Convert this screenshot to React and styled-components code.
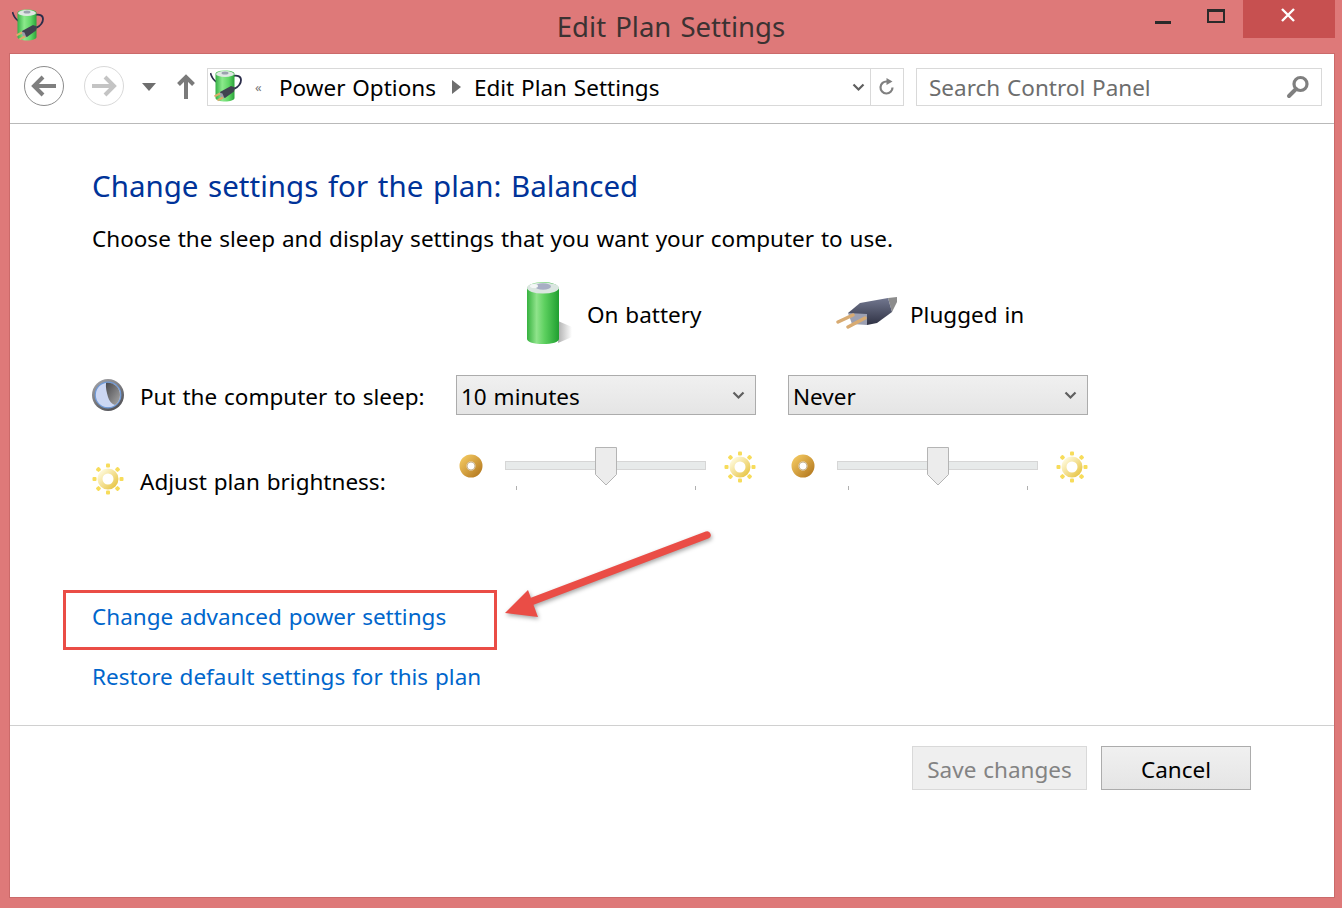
import React from "react";
import styled, { createGlobalStyle } from "styled-components";

const GlobalStyle = createGlobalStyle`
  html, body {
    margin: 0;
    padding: 0;
    background: #de7979;
  }
  * {
    box-sizing: border-box;
  }
`;

const FONT = `"Noto Sans", "Open Sans", "Liberation Sans", sans-serif`;

function PowerIcon({ id, size = 32 }) {
  return (
    <svg width={size} height={size} viewBox="0 0 32 32">
      <defs>
        <linearGradient id={`${id}-body`} x1="0" y1="0" x2="1" y2="0">
          <stop offset="0" stopColor="#35b045" />
          <stop offset="0.35" stopColor="#8ce98c" />
          <stop offset="0.7" stopColor="#5fd765" />
          <stop offset="1" stopColor="#2ba23a" />
        </linearGradient>
      </defs>
      <path d="M0.500 3c1 4 3 7 6 9" fill="none" stroke="#2b2d4a" strokeWidth="1.600" />
      <path d="M23 6c4-1 8 0 8 4 0 4-3 7-7 9" fill="none" stroke="#2b2d4a" strokeWidth="1.800" />
      <path d="M5.500 4c0-2 3.500-3.500 9.500-3.500s9.500 1.500 9.500 3.500v24c0 2-4.500 3.500-9.500 3.500S5.500 30 5.500 28z" fill={`url(#${id}-body)`} />
      <ellipse cx="15" cy="4" rx="9" ry="3" fill="#dfe7e3" />
      <ellipse cx="15" cy="3" rx="3.500" ry="1.600" fill="#9aa2ae" />
      <path d="M10 22l11-6 4 1.500-1 4-9 6.500-3-1z" fill="#40424f" />
      <path d="M9 22.500l3.500 1 2 5-3.500-1z" fill="#9a9dab" />
      <path d="M10 23.500l-5.500 2.800M13 27.500l-5.500 2.800" stroke="#dcab6a" strokeWidth="2" />
    </svg>
  );
}

function BigBattery() {
  return (
    <svg width="48" height="64" viewBox="0 0 48 64">
      <defs>
        <linearGradient id="bat-body" x1="0" y1="0" x2="1" y2="0">
          <stop offset="0" stopColor="#36b23f" />
          <stop offset="0.3" stopColor="#8fe38b" />
          <stop offset="0.55" stopColor="#5dd05f" />
          <stop offset="1" stopColor="#1f9f30" />
        </linearGradient>
        <linearGradient id="bat-shadow" x1="0" y1="0" x2="1" y2="0">
          <stop offset="0" stopColor="#b0b0b0" />
          <stop offset="1" stopColor="#ffffff" />
        </linearGradient>
      </defs>
      <path d="M32 40l14 6v10l-14 6z" fill="url(#bat-shadow)" />
      <path d="M1 8c0-4 7-7 16-7s16 3 16 7v50c0 3-7 5-16 5S1 61 1 58z" fill="url(#bat-body)" />
      <ellipse cx="17" cy="7" rx="16" ry="5.500" fill="#dbe6e1" />
      <ellipse cx="17" cy="5.500" rx="8" ry="3.200" fill="#a8aec4" />
      <ellipse cx="8" cy="5" rx="4" ry="2" fill="#f4f7f6" />
    </svg>
  );
}

function BigPlug() {
  return (
    <svg width="64" height="32" viewBox="0 0 64 32">
      <defs>
        <linearGradient id="plug-body" x1="0" y1="0" x2="0" y2="1">
          <stop offset="0" stopColor="#72778f" />
          <stop offset="1" stopColor="#2f3244" />
        </linearGradient>
      </defs>
      <path d="M53 1l9-1v5l-5 10z" fill="#8c8c8c" />
      <path d="M13 16L25 6 53 1l4 14-15 11-10 2z" fill="url(#plug-body)" />
      <path d="M13 16l19 1v11l-15-1z" fill="#9ca0b2" />
      <path d="M3 25l15-7M13 30l17-9" stroke="#d8ab72" strokeWidth="3.400" strokeLinecap="round" />
    </svg>
  );
}

function SleepIcon() {
  return (
    <svg width="32" height="32" viewBox="0 0 32 32">
      <defs>
        <linearGradient id="sleep-ring" x1="0" y1="0" x2="0.600" y2="1">
          <stop offset="0" stopColor="#a9a9ac" />
          <stop offset="1" stopColor="#55555a" />
        </linearGradient>
        <linearGradient id="sleep-moon" x1="0" y1="0" x2="1" y2="1">
          <stop offset="0" stopColor="#48484c" />
          <stop offset="1" stopColor="#a8a8a8" />
        </linearGradient>
      </defs>
      <circle cx="16" cy="16" r="16" fill="url(#sleep-ring)" />
      <circle cx="16" cy="16" r="12.800" fill="#ccd7f3" stroke="#6f9ad8" strokeWidth="1.200" />
      <path d="M14 4c7-1 14 4 14 12 0 4-2 8-5 10-3-1-6-4-7-8-1.500-5-2.500-10-2-14z" fill="url(#sleep-moon)" />
    </svg>
  );
}

function SunIcon({ id, size = 32 }) {
  const dots = [0, 45, 90, 135, 180, 225, 270, 315];
  return (
    <svg width={size} height={size} viewBox="0 0 32 32">
      <defs>
        <linearGradient id={id} x1="0" y1="0" x2="1" y2="1">
          <stop offset="0" stopColor="#fffbe0" />
          <stop offset="1" stopColor="#e8c545" />
        </linearGradient>
      </defs>
      {dots.map((d) => (
        <rect key={d} x="14" y="0.500" width="4" height="4" rx="1" fill="#f7dc5a" transform={`rotate(${d} 16 16)`} />
      ))}
      <circle cx="16" cy="16" r="8" fill="none" stroke={`url(#${id})`} strokeWidth="5" />
      <circle cx="16" cy="16" r="4" fill="#fff" />
    </svg>
  );
}

function DimIcon({ id }) {
  return (
    <svg width="24" height="24" viewBox="0 0 24 24">
      <defs>
        <linearGradient id={id} x1="0" y1="0" x2="1" y2="1">
          <stop offset="0" stopColor="#efc35c" />
          <stop offset="1" stopColor="#b97f25" />
        </linearGradient>
      </defs>
      <circle cx="12" cy="12" r="8" fill="none" stroke={`url(#${id})`} strokeWidth="7" />
      <circle cx="12" cy="12" r="4" fill="#fff" stroke="#8f6b2b" strokeWidth="0.500" />
    </svg>
  );
}

function NavArrow({ color, flip }) {
  return (
    <svg width="26" height="22" viewBox="0 0 26 22" style={flip ? { transform: "scaleX(-1)" } : undefined}>
      <path d="M12 2L3 11l9 9M3.500 11H25" fill="none" stroke={color} strokeWidth="4" />
    </svg>
  );
}

function Chevron({ color = "#5f5f5f" }) {
  return (
    <svg width="13" height="9" viewBox="0 0 13 9">
      <path d="M1.500 1.500l5 5 5-5" fill="none" stroke={color} strokeWidth="2.200" />
    </svg>
  );
}

function SliderControl({ id }) {
  return (
    <SliderRow>
      <DimSlot>
        <DimIcon id={`dim-${id}`} />
      </DimSlot>
      <Slider>
        <SliderTrack />
        <SliderThumb width="22" height="39" viewBox="0 0 22 39">
          <path d="M.5.5h21v27L11 38 .5 27.500z" fill="#ececec" stroke="#b4b4b4" />
        </SliderThumb>
        <SliderTicks>
          <Tick />
          <Tick />
        </SliderTicks>
      </Slider>
      <SunSlot>
        <SunIcon id={`sun-${id}`} />
      </SunSlot>
    </SliderRow>
  );
}

export default function App() {
  return (
    <Window>
      <GlobalStyle />
      <TitleBar>
        <AppIcon>
          <PowerIcon id="title-icon" />
        </AppIcon>
        <Title>Edit Plan Settings</Title>
        <WindowControls>
          <WinButton>
            <MinGlyph />
          </WinButton>
          <WinButton>
            <MaxGlyph />
          </WinButton>
          <CloseButton>
            <svg width="16" height="14" viewBox="0 0 16 14">
              <path d="M2 1l12 12M14 1L2 13" stroke="#fff" strokeWidth="2.400" />
            </svg>
          </CloseButton>
        </WindowControls>
      </TitleBar>

      <Pane>
        <Toolbar>
          <NavCircle>
            <NavArrow color="#7f7f7f" />
          </NavCircle>
          <NavCircle $disabled>
            <NavArrow color="#c4c4c4" flip />
          </NavCircle>
          <HistoryCaret width="14" height="8" viewBox="0 0 14 8">
            <path d="M0 0h14L7 8z" fill="#6e6e6e" />
          </HistoryCaret>
          <UpArrow width="18" height="26" viewBox="0 0 18 26">
            <path d="M9 25V3M1.500 10.500L9 3l7.500 7.500" fill="none" stroke="#7a7a7a" strokeWidth="4" />
          </UpArrow>
          <AddressBar>
            <AddressIcon>
              <PowerIcon id="address-icon" />
            </AddressIcon>
            <Overflow>«</Overflow>
            <Crumb>Power Options</Crumb>
            <CrumbArrow width="9" height="14" viewBox="0 0 9 14">
              <path d="M0 0l9 7-9 7z" fill="#6e6e6e" />
            </CrumbArrow>
            <Crumb>Edit Plan Settings</Crumb>
            <AddressChevron>
              <Chevron />
            </AddressChevron>
            <RefreshSlot>
              <svg width="16" height="18" viewBox="0 0 16 18">
                <path d="M13.500 9.500A6 6 0 1 1 8 3.500" fill="none" stroke="#808080" strokeWidth="2.200" />
                <path d="M7.500 0l6 3.500-6 3.500z" fill="#808080" />
              </svg>
            </RefreshSlot>
          </AddressBar>
          <SearchBox>
            <SearchText>Search Control Panel</SearchText>
            <SearchGlyph width="24" height="24" viewBox="0 0 24 24">
              <circle cx="14.500" cy="9" r="6.500" fill="none" stroke="#7f7f7f" strokeWidth="3.200" />
              <path d="M10 14L3 21" stroke="#7f7f7f" strokeWidth="4" strokeLinecap="round" />
            </SearchGlyph>
          </SearchBox>
        </Toolbar>

        <Main>
          <Heading>Change settings for the plan: Balanced</Heading>
          <Intro>Choose the sleep and display settings that you want your computer to use.</Intro>

          <SettingsGrid>
            <span />
            <ColumnHead $indent={70} $gap={13}>
              <BigBattery />
              <CellText>On battery</CellText>
            </ColumnHead>
            <ColumnHead $indent={47} $gap={11}>
              <BigPlug />
              <CellText>Plugged in</CellText>
            </ColumnHead>

            <RowLabel>
              <SleepIcon />
              <CellText $drop={2}>Put the computer to sleep:</CellText>
            </RowLabel>
            <Select>
              <CellText $drop={2}>10 minutes</CellText>
              <Chevron />
            </Select>
            <Select>
              <CellText $drop={2}>Never</CellText>
              <Chevron />
            </Select>

            <RowLabel $offset={14}>
              <SunIcon id="sun-label" />
              <CellText>Adjust plan brightness:</CellText>
            </RowLabel>
            <SliderControl id="battery" />
            <SliderControl id="plugged" />
          </SettingsGrid>

          <LinkList>
            <Highlighted>
              <PlanLink>Change advanced power settings</PlanLink>
              <HighlightBox />
            </Highlighted>
            <PlanLink>Restore default settings for this plan</PlanLink>
          </LinkList>
        </Main>

        <Footer>
          <DialogButton $width={175} disabled>
            Save changes
          </DialogButton>
          <DialogButton $width={150}>Cancel</DialogButton>
        </Footer>
      </Pane>

      <Arrow width="240" height="110" viewBox="0 0 240 110">
        <path d="M217 15L35 84" stroke="#ea4d46" strokeWidth="7.500" strokeLinecap="round" />
        <path d="M15 93L38 70l10 27z" fill="#ea4d46" />
      </Arrow>
    </Window>
  );
}

const Window = styled.div`
  position: relative;
  display: flex;
  flex-direction: column;
  width: 1342px;
  height: 908px;
  overflow: hidden;
  background: #de7979;
  font-family: ${FONT};
  font-size: 22.500px;
  word-spacing: 1px;
  color: #000;
`;

const TitleBar = styled.div`
  display: grid;
  grid-template-columns: 1fr auto 1fr;
  height: 54px;
  flex: none;
`;

const AppIcon = styled.div`
  padding: 9px 0 0 12px;
`;

const Title = styled.div`
  font-size: 27.500px;
  word-spacing: 2px;
  line-height: 54px;
  color: #3b3232;
`;

const WindowControls = styled.div`
  display: flex;
  justify-self: end;
  align-items: flex-start;
  margin-right: 7px;
`;

const WinButton = styled.div`
  display: flex;
  align-items: center;
  justify-content: center;
  width: 53px;
  height: 38px;
`;

const MinGlyph = styled.span`
  display: block;
  width: 16px;
  height: 3px;
  margin: 7px 1px 0 0;
  background: #2a2a2a;
`;

const MaxGlyph = styled.span`
  display: block;
  width: 18px;
  height: 14px;
  margin: 0 1px 7px 0;
  border: 2px solid #2a2a2a;
  border-top-width: 3px;
`;

const CloseButton = styled(WinButton)`
  width: 92px;
  padding: 0 2px 8px 0;
  background: #c75050;
`;

const Pane = styled.div`
  display: flex;
  flex-direction: column;
  flex: 1;
  margin: 0 8px 11px 10px;
  background: #fff;
  box-shadow: 0 0 0 1px #cb6a6a;
`;

const Toolbar = styled.div`
  display: flex;
  align-items: center;
  flex: none;
  height: 70px;
  padding: 0 12px 3px 14px;
  background: #fff;
  border-bottom: 1px solid #b9b9b9;
`;

const NavCircle = styled.div`
  display: flex;
  align-items: center;
  justify-content: center;
  width: 40px;
  height: 40px;
  margin: 0 20px 2px 0;
  border-radius: 50%;
  border: 1px solid ${(p) => (p.$disabled ? "#d9d9d9" : "#8c8c8c")};
`;

const HistoryCaret = styled.svg`
  margin: 0 0 0 -2px;
`;

const UpArrow = styled.svg`
  margin-left: 21px;
`;

const AddressBar = styled.div`
  display: flex;
  align-items: center;
  width: 697px;
  height: 38px;
  margin-left: 12px;
  border: 1px solid #d9d9d9;
`;

const AddressIcon = styled.div`
  height: 32px;
  margin: 0 0 2px 2px;
`;

const Overflow = styled.span`
  width: 8px;
  margin-left: 13px;
  font-size: 13px;
  line-height: 1;
  color: #777;
`;

const Crumb = styled.span`
  margin: 2px 0 0 16px;
  line-height: 36px;
`;

const CrumbArrow = styled.svg`
  margin-left: 16px;
  margin-right: -3px;
`;

const AddressChevron = styled.div`
  display: flex;
  margin-left: auto;
  margin-right: 5px;
`;

const RefreshSlot = styled.div`
  display: flex;
  align-items: center;
  justify-content: center;
  width: 33px;
  height: 100%;
  border-left: 1px solid #d9d9d9;
`;

const SearchBox = styled.div`
  display: flex;
  align-items: center;
  justify-content: space-between;
  width: 406px;
  height: 38px;
  margin-left: 12px;
  padding: 0 12px;
  border: 1px solid #d9d9d9;
`;

const SearchText = styled.span`
  color: #6d6d6d;
`;

const SearchGlyph = styled.svg`
  margin-right: -1px;
`;

const Main = styled.div`
  flex: 1;
  padding: 42px 0 0 82px;
`;

const Heading = styled.h1`
  margin: 0;
  font-size: 29.500px;
  word-spacing: 2px;
  font-weight: 400;
  line-height: 40px;
  color: #003399;
`;

const Intro = styled.p`
  margin: 17px 0 0;
  line-height: 32px;
`;

const SettingsGrid = styled.div`
  display: grid;
  grid-template-columns: 364px 332px 300px;
  grid-template-rows: 64px 40px 50px;
  row-gap: 30px;
  margin-top: 26px;
`;

const CellText = styled.span`
  margin-top: ${(p) => p.$drop ?? 4}px;
`;

const ColumnHead = styled.div`
  display: flex;
  align-items: center;
  gap: ${(p) => p.$gap}px;
  padding-left: ${(p) => p.$indent}px;
  line-height: 32px;
`;

const RowLabel = styled.div`
  display: flex;
  align-items: center;
  align-self: start;
  gap: 16px;
  height: 40px;
  margin-top: ${(p) => p.$offset || 0}px;
`;

const Select = styled.div`
  display: flex;
  align-items: center;
  justify-content: space-between;
  width: 300px;
  height: 40px;
  padding: 0 10px 0 4px;
  background: linear-gradient(#f0f0f0, #e5e5e5);
  border: 1px solid #acacac;
`;

const SliderRow = styled.div`
  display: flex;
  align-items: flex-start;
  width: 300px;
`;

const DimSlot = styled.div`
  margin: 9px 0 0 3px;
`;

const Slider = styled.div`
  position: relative;
  width: 201px;
  height: 46px;
  margin: 0 0 0 22px;
`;

const SliderTrack = styled.div`
  position: absolute;
  top: 16px;
  left: 0;
  right: 0;
  height: 9px;
  background: #e7eaea;
  border: 1px solid #d6d6d6;
`;

const SliderThumb = styled.svg`
  position: absolute;
  top: 2px;
  left: 90px;
`;

const SliderTicks = styled.div`
  position: absolute;
  top: 41px;
  left: 11px;
  right: 10px;
  display: flex;
  justify-content: space-between;
`;

const Tick = styled.span`
  width: 1px;
  height: 4px;
  background: #b0b0b0;
`;

const SunSlot = styled.div`
  margin: 6px 0 0 18px;
`;

const LinkList = styled.div`
  display: flex;
  flex-direction: column;
  gap: 28px;
  margin-top: 106px;
`;

const Highlighted = styled.div`
  position: relative;
`;

const PlanLink = styled.a`
  display: block;
  line-height: 32px;
  color: #0066cc;
`;

const HighlightBox = styled.div`
  position: absolute;
  top: -11px;
  left: -29px;
  width: 434px;
  height: 60px;
  border: 3px solid #ea4d46;
`;

const Footer = styled.div`
  display: flex;
  justify-content: flex-end;
  gap: 14px;
  flex: none;
  height: 172px;
  padding: 20px 83px 0 0;
  border-top: 1px solid #d0d0d0;
`;

const DialogButton = styled.button`
  width: ${(p) => p.$width}px;
  height: 44px;
  padding: 3px 0 0;
  font: inherit;
  word-spacing: inherit;
  color: #000;
  background: linear-gradient(#f0f0f0, #e5e5e5);
  border: 1px solid #acacac;
  &:disabled {
    color: #838383;
    background: #efefef;
    border-color: #d9d9d9;
  }
`;

const Arrow = styled.svg`
  position: absolute;
  top: 520px;
  left: 490px;
  filter: drop-shadow(1px 2px 2px rgba(0, 0, 0, 0.35));
`;
